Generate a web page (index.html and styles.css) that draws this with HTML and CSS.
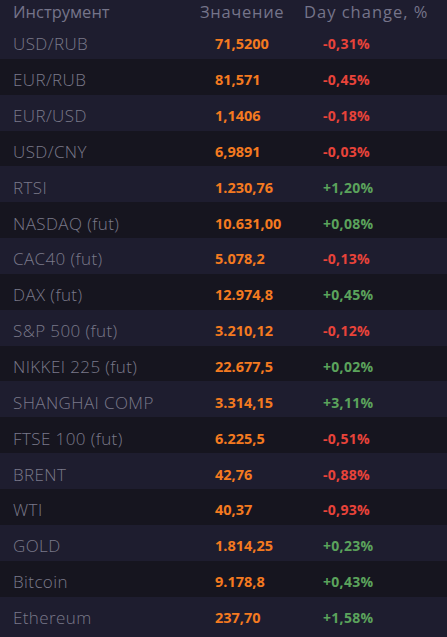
FILE: index.html
```html
<!DOCTYPE html>
<html>
<head>
<meta charset="utf-8">
<link rel="stylesheet" href="styles.css">
</head>
<body>
<div class="table">
  <div class="row head">
    <div class="c-name">Инструмент</div>
    <div class="c-val">Значение</div>
    <div class="c-chg">Day change, %</div>
  </div>
  <div class="row"><div class="c-name">USD/RUB</div><div class="c-val">71,5200</div><div class="c-chg neg">-0,31%</div></div>
  <div class="row"><div class="c-name">EUR/RUB</div><div class="c-val">81,571</div><div class="c-chg neg">-0,45%</div></div>
  <div class="row"><div class="c-name">EUR/USD</div><div class="c-val">1,1406</div><div class="c-chg neg">-0,18%</div></div>
  <div class="row"><div class="c-name">USD/CNY</div><div class="c-val">6,9891</div><div class="c-chg neg">-0,03%</div></div>
  <div class="row"><div class="c-name">RTSI</div><div class="c-val">1.230,76</div><div class="c-chg pos">+1,20%</div></div>
  <div class="row"><div class="c-name">NASDAQ (fut)</div><div class="c-val">10.631,00</div><div class="c-chg pos">+0,08%</div></div>
  <div class="row"><div class="c-name">CAC40 (fut)</div><div class="c-val">5.078,2</div><div class="c-chg neg">-0,13%</div></div>
  <div class="row"><div class="c-name">DAX (fut)</div><div class="c-val">12.974,8</div><div class="c-chg pos">+0,45%</div></div>
  <div class="row"><div class="c-name">S&amp;P 500 (fut)</div><div class="c-val">3.210,12</div><div class="c-chg neg">-0,12%</div></div>
  <div class="row"><div class="c-name">NIKKEI 225 (fut)</div><div class="c-val">22.677,5</div><div class="c-chg pos">+0,02%</div></div>
  <div class="row"><div class="c-name">SHANGHAI COMP</div><div class="c-val">3.314,15</div><div class="c-chg pos">+3,11%</div></div>
  <div class="row"><div class="c-name">FTSE 100 (fut)</div><div class="c-val">6.225,5</div><div class="c-chg neg">-0,51%</div></div>
  <div class="row"><div class="c-name">BRENT</div><div class="c-val">42,76</div><div class="c-chg neg">-0,88%</div></div>
  <div class="row"><div class="c-name">WTI</div><div class="c-val">40,37</div><div class="c-chg neg">-0,93%</div></div>
  <div class="row"><div class="c-name">GOLD</div><div class="c-val">1.814,25</div><div class="c-chg pos">+0,23%</div></div>
  <div class="row"><div class="c-name">Bitcoin</div><div class="c-val">9.178,8</div><div class="c-chg pos">+0,43%</div></div>
  <div class="row"><div class="c-name">Ethereum</div><div class="c-val">237,70</div><div class="c-chg pos">+1,58%</div></div>
</div>
</body>
</html>
```
FILE: styles.css
```css
html, body {
  margin: 0;
  padding: 0;
  background: #1e1d2f;
}
.table {
  display: flex;
  flex-direction: column;
  width: 447px;
  height: 637px;
  background: #1e1d2f;
}
.row {
  display: grid;
  grid-template-columns: 215px 108px 1fr;
  align-items: center;
  box-sizing: border-box;
  height: 35.85px;
  flex: none;
  padding-top: 6px;
  font-family: "Open Sans", sans-serif;
}
.row:nth-child(odd) {
  background: #16151f;
}
.row:nth-child(even) {
  background: #1e1d2f;
}
.row.head {
  height: 23px;
  padding-top: 0;
  background: #1e1d2f;
  grid-template-columns: 200px 104px 1fr;
  align-items: start;
}
.head .c-name { padding-left: 4px; }
.row .c-name {
  padding-left: 13px;
  font-size: 17px;
  font-weight: 300;
  letter-spacing: 0.4px;
  color: #7a798a;
}
.head .c-name, .head .c-val, .head .c-chg {
  font-size: 16.5px;
  font-weight: 400;
  color: #75748a;
  line-height: 24px;
  letter-spacing: 0;
}
.head .c-val { letter-spacing: 0.7px; }
.head .c-chg { letter-spacing: 1px; }
.c-val {
  font-size: 14.5px;
  font-weight: 700;
  letter-spacing: 0;
  color: #f47a20;
}
.c-chg {
  font-size: 14px;
  font-weight: 700;
  letter-spacing: 0.3px;
}
.neg { color: #e8433a; }
.pos { color: #5ba35c; }
```
